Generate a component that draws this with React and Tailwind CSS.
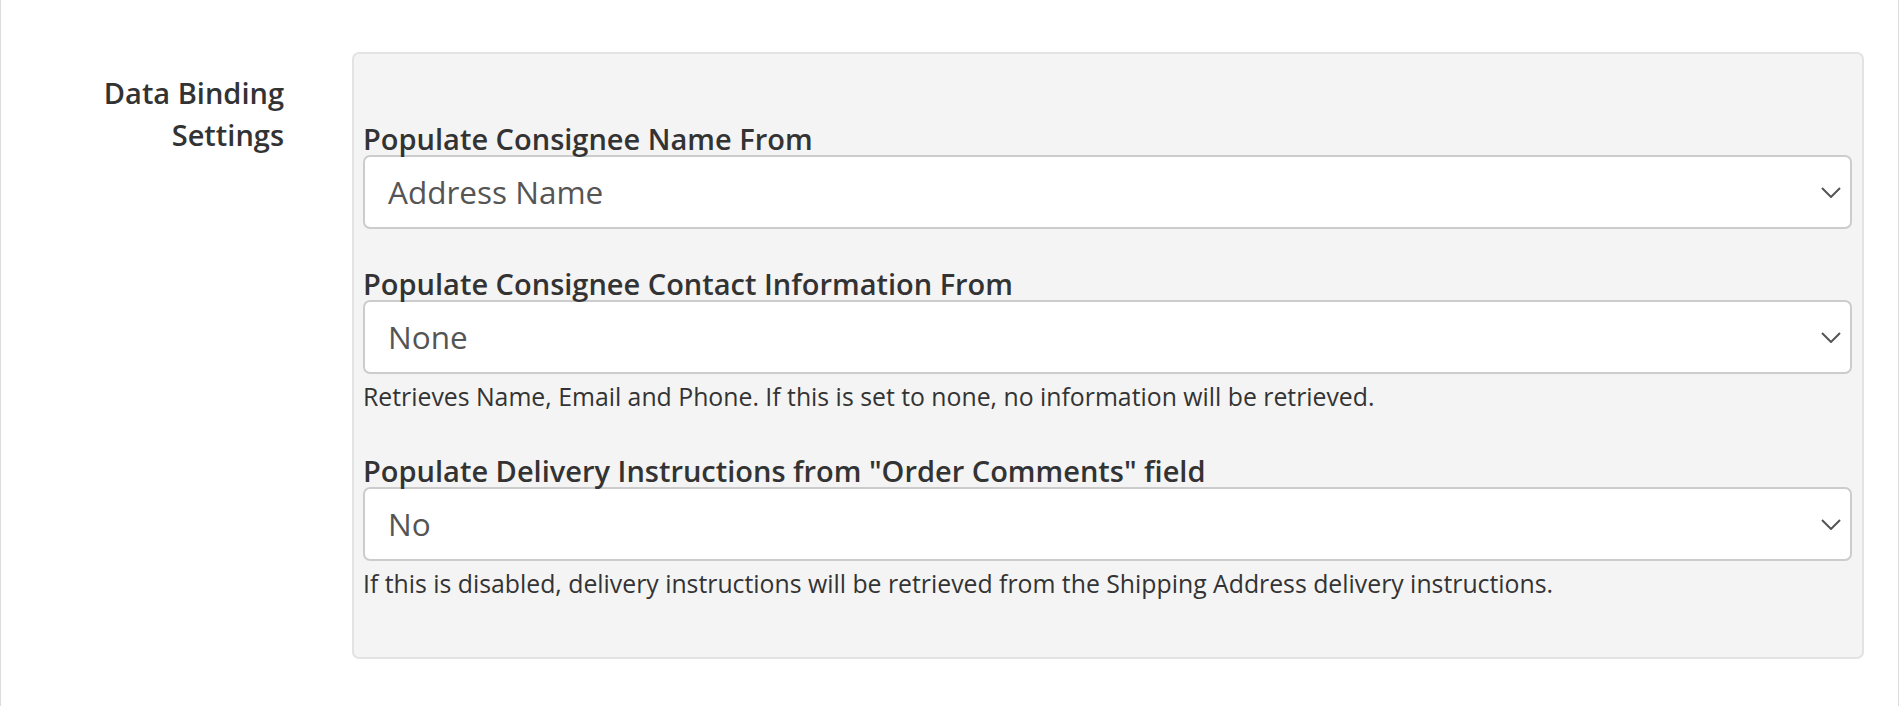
import React from 'react'

function Chevron() {
    return (
        <svg width="20" height="11" viewBox="0 0 20 11" fill="none" className="shrink-0">
            <path d="M1 1l9 9 9-9" stroke="#555" strokeWidth="2" />
        </svg>
    )
}

function SelectField({ label, value, help, className }) {
    return (
        <div className={className}>
            <div className="text-[29px] font-semibold leading-[30px] text-[#333]">{label}</div>
            <div className="mt-px h-[74px] flex items-center justify-between bg-white border-2 border-[#cccccc] rounded-[7px] pl-[23px] pr-[9px]">
                <span className="text-[31.5px] text-[#555]">{value}</span>
                <Chevron />
            </div>
            {help && (
                <div className="mt-[5px] text-[24.8px] leading-[34px] text-[#333]">{help}</div>
            )}
        </div>
    )
}

export default function App() {
    return (
        <div className="w-full h-[706px] bg-white border-x border-[#dcdcdc] font-['Open_Sans',sans-serif]">
            <div className="flex pt-[52px]">
                {/* Section label */}
                <div className="w-[283px] shrink-0 pt-[20px] text-right text-[29px] font-semibold leading-[42px] text-[#333]">
                    Data Binding
                    <br />
                    Settings
                </div>

                {/* Settings panel */}
                <div className="ml-[68px] w-[1512px] bg-[#f4f4f4] border-2 border-[#e3e3e3] rounded-[7px] pl-[9px] pr-[10px] pt-[70px] pb-[57px]">
                    <SelectField label="Populate Consignee Name From" value="Address Name" />
                    <SelectField
                        className="mt-[40px]"
                        label="Populate Consignee Contact Information From"
                        value="None"
                        help="Retrieves Name, Email and Phone. If this is set to none, no information will be retrieved."
                    />
                    <SelectField
                        className="mt-[43px]"
                        label={'Populate Delivery Instructions from "Order Comments" field'}
                        value="No"
                        help="If this is disabled, delivery instructions will be retrieved from the Shipping Address delivery instructions."
                    />
                </div>
            </div>
        </div>
    )
}
